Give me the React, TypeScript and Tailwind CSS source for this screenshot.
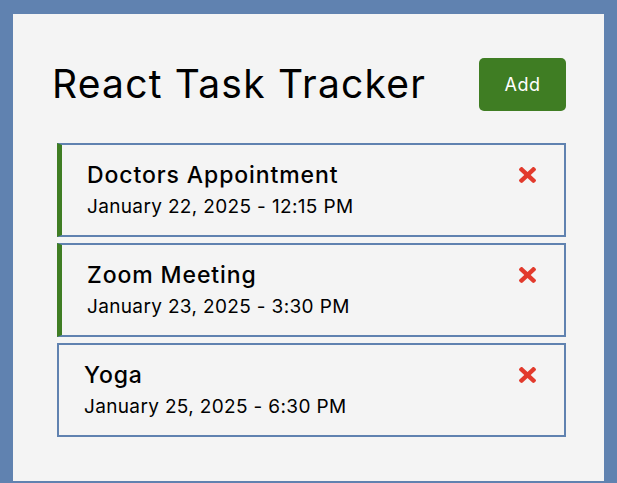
import React from 'react';

interface Task {
  id: number;
  text: string;
  day: string;
  reminder: boolean;
}

const tasks: Task[] = [
  { id: 1, text: 'Doctors Appointment', day: 'January 22, 2025 - 12:15 PM', reminder: true },
  { id: 2, text: 'Zoom Meeting', day: 'January 23, 2025 - 3:30 PM', reminder: true },
  { id: 3, text: 'Yoga', day: 'January 25, 2025 - 6:30 PM', reminder: false },
];

// bold "times" glyph, same shape as font-awesome's
const TimesIcon = () => (
  <svg viewBox="0 80 352 352" className="mt-[8px] h-[16px] w-[17px] shrink-0 fill-[#e23a2c]" preserveAspectRatio="none">
    <path d="M242.72 256l100.07-100.07c12.28-12.28 12.28-32.19 0-44.48l-22.24-22.24c-12.28-12.28-32.19-12.28-44.48 0L176 189.28 75.93 89.21c-12.28-12.28-32.19-12.28-44.48 0L9.21 111.45c-12.28 12.280-12.28 32.19 0 44.48L109.28 256 9.21 356.07c-12.28 12.28-12.28 32.19 0 44.48l22.24 22.24c12.28 12.28 32.2 12.28 44.48 0L176 322.72l100.07 100.07c12.28 12.28 32.2 12.28 44.48 0l22.24-22.24c12.28-12.28 12.28-32.19 0-44.48L242.72 256z" />
  </svg>
);

const TaskItem: React.FC<{ task: Task }> = ({ task }) => {
  return (
    <div
      className={`flex h-[94px] items-start justify-between border-2 border-[#6082b0] bg-[#f4f4f4] pt-[14px] pr-[28px] ${
        task.reminder ? 'border-l-[5px] border-l-[#3f7d23] pl-[25px]' : 'pl-[25px]'
      }`}
    >
      <div>
        <h3 className="text-[23px] font-medium leading-[32px] tracking-[0.9px] text-black">{task.text}</h3>
        <p className="mt-[4px] text-[19px] leading-[24px] tracking-[0.35px] text-black">{task.day}</p>
      </div>
      <TimesIcon />
    </div>
  );
};

export default function App() {
  return (
    <div className="h-[483px] w-full bg-[#6082b0] px-[13px] pt-[14px] pb-[2px] font-['Inter',sans-serif]">
      <div className="h-full bg-[#f4f4f4] px-[38px] pt-[43px]">
        <header className="flex items-center justify-between pl-[1px]">
          <h1 className="text-[39px] font-normal leading-[54px] tracking-[1.2px] text-black">React Task Tracker</h1>
          <button className="h-[53px] w-[87px] rounded-[5px] bg-[#3f7d23] text-[18px] tracking-[0.5px] text-white">
            Add
          </button>
        </header>
        <div className="mt-[32px] ml-[6px] flex flex-col gap-[6px]">
          {tasks.map((t) => (
            <TaskItem key={t.id} task={t} />
          ))}
        </div>
      </div>
    </div>
  );
}
